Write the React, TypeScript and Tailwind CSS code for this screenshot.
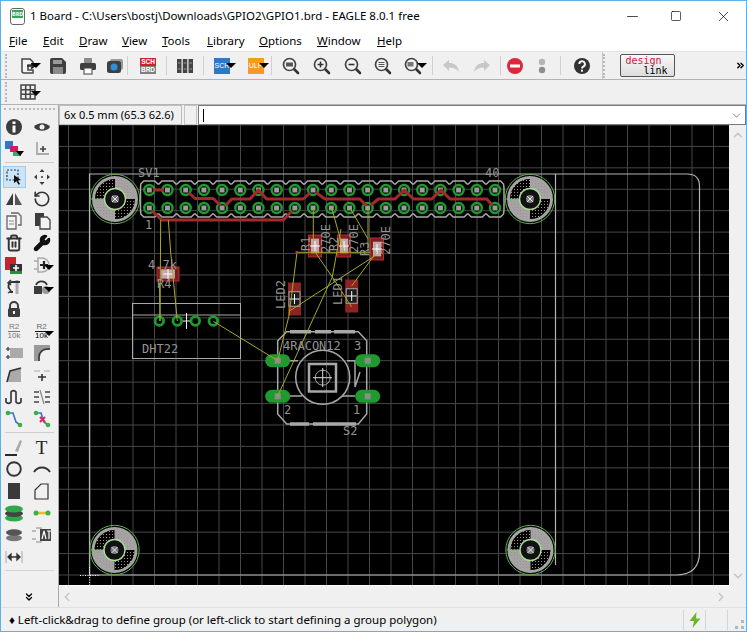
import React from "react";
import { Minus, Square, X, ChevronDown, ChevronUp, ChevronLeft, ChevronRight, ChevronsDown, ChevronsRight, Wrench, RotateCcw, Trash2 } from "lucide-react";

const Ico = ({ children, w = 18, h = 18 }: { children: React.ReactNode; w?: number; h?: number }) => (
  <svg width={w} height={h} viewBox={`0 0 ${w} ${h}`}>{children}</svg>
);

const Caret = () => (
  <span className="absolute left-[60%] top-[11px] w-0 h-0 border-x-[5px] border-x-transparent border-t-[5px] border-t-black" />
);

const Cell = ({ className, children, caret }: { className: string; children?: React.ReactNode; caret?: boolean }) => (
  <div className={`relative flex items-center justify-center h-full shrink-0 ${className}`}>
    {children}
    {caret && <Caret />}
  </div>
);

const Sep = () => <div className="w-px h-[19px] bg-[#d0d0d0] shrink-0" />;
const Grip = () => <div className="w-[3px] h-[24px] shrink-0 border-l-2 border-dotted border-[#b8b8b8]" />;

const Mag = ({ kind }: { kind: "fit" | "in" | "out" | "sel" | "last" }) => (
  <Ico>
    <path d="M11 11l5 5" stroke="#333" strokeWidth="2.6" strokeLinecap="round" />
    <circle cx="7.5" cy="7.5" r="6" fill="#f4f4f4" stroke="#444" strokeWidth="1.7" />
    {kind === "in" && <path d="M4.5 7.5h6M7.5 4.5v6" stroke="#333" strokeWidth="1.6" />}
    {kind === "out" && <path d="M4.5 7.5h6" stroke="#333" strokeWidth="1.6" />}
    {kind === "fit" && <rect x="4" y="5.5" width="7" height="4" fill="#555" />}
    {kind === "sel" && <path d="M4.5 5.5h6M4.5 7.5h6M4.5 9.5h6" stroke="#555" strokeWidth="1" />}
    {kind === "last" && <rect x="3.5" y="5" width="6" height="4.5" fill="#777" />}
  </Ico>
);

const TopToolbar = () => (
  <div className="flex items-center h-[29px] bg-[#f0f0f0] border-t border-t-[#e4e4e4] border-b border-b-[#b4b4b4]">
    <div className="w-[11px] flex justify-center"><Grip /></div>
    <Cell className="w-[31px]" caret>
      <Ico><path d="M3 2h8l3 3v3H9v5h5v3H5a2 2 0 0 1-2-2z" fill="#f4f4f4" stroke="#444" strokeWidth="1.5" /><path d="M8 9h6M12 6.5L15.5 9 12 11.5" stroke="#222" strokeWidth="1.7" fill="none" /></Ico>
    </Cell>
    <Cell className="w-[29px]">
      <Ico><path d="M1 3a2 2 0 0 1 2-2h10l4 4v10a2 2 0 0 1-2 2H3a2 2 0 0 1-2-2z" fill="#3f3f3f" /><rect x="4" y="3" width="9" height="4" fill="#9a9a9a" /><rect x="4" y="10" width="10" height="7" fill="#8a8a8a" /></Ico>
    </Cell>
    <Cell className="w-[31px]">
      <Ico><rect x="5" y="1" width="8" height="5" fill="#8b8b8b" /><rect x="1" y="6" width="16" height="7" rx="1.5" fill="#3f3f3f" /><rect x="5" y="11" width="8" height="6" fill="#fff" stroke="#3f3f3f" /></Ico>
    </Cell>
    <Cell className="w-[24px]">
      <Ico><rect x="4" y="2" width="13" height="11" rx="2" fill="#999" /><rect x="1" y="4" width="14" height="12" rx="2.5" fill="#3f3f3f" /><circle cx="8" cy="10" r="3.5" fill="#2f8fd8" /></Ico>
    </Cell>
    <div className="w-[3px]"><Sep /></div>
    <Cell className="w-[36px]">
      <div className="w-[16px] h-[16px] flex flex-col">
        <div className="h-1/2 bg-[#c1272d] text-white text-[6.5px] leading-[8px] text-center font-bold [font-family:'Liberation_Sans',sans-serif]">SCH</div>
        <div className="h-1/2 bg-[#808080] text-white text-[6.5px] leading-[8px] text-center font-bold [font-family:'Liberation_Sans',sans-serif]">BRD</div>
      </div>
    </Cell>
    <Sep />
    <Cell className="w-[36px]">
      <Ico><rect x="1" y="2" width="4.5" height="14" fill="#444" /><rect x="6.75" y="2" width="4.5" height="14" fill="#444" /><rect x="12.5" y="2" width="4.5" height="14" fill="#444" /><path d="M2 6h2.5M2 12h2.5M7.75 6h2.5M7.75 12h2.5M13.5 6H16M13.5 12H16" stroke="#999" strokeWidth="1" /></Ico>
    </Cell>
    <Sep />
    <Cell className="w-[36px]" caret>
      <div className="w-[16px] h-[16px] bg-[#2f78c4] text-white text-[7px] leading-[16px] text-center [font-family:'Liberation_Sans',sans-serif]">SCR</div>
    </Cell>
    <Cell className="w-[31px]" caret>
      <div className="w-[16px] h-[16px] bg-[#f59b23] text-white text-[7px] leading-[16px] text-center [font-family:'Liberation_Sans',sans-serif]">ULP</div>
    </Cell>
    <Sep />
    <Cell className="w-[38px]"><Mag kind="fit" /></Cell>
    <Cell className="w-[24px]"><Mag kind="in" /></Cell>
    <Cell className="w-[38px]"><Mag kind="out" /></Cell>
    <Cell className="w-[22px]"><Mag kind="sel" /></Cell>
    <Cell className="w-[38px]" caret><Mag kind="last" /></Cell>
    <Sep />
    <Cell className="w-[36px]">
      <Ico><path d="M1 8l6-5v3c5 0 9 2 10 9-2-3-5-4.500-10-4.500V14z" fill="#c8c8c8" /></Ico>
    </Cell>
    <Cell className="w-[26px]">
      <Ico><path d="M17 8l-6-5v3C6 6 2 8 1 15c2-3 5-4.500 10-4.500V14z" fill="#c8c8c8" /></Ico>
    </Cell>
    <div className="w-[5px]" />
    <Sep />
    <Cell className="w-[28px]">
      <Ico><circle cx="9" cy="9" r="8" fill="#e0263a" /><rect x="4" y="7.5" width="10" height="3" fill="#fff" /></Ico>
    </Cell>
    <Cell className="w-[26px]">
      <Ico><circle cx="9" cy="5" r="3.2" fill="#b5b5b5" /><circle cx="9" cy="13" r="3.2" fill="#8e8e8e" /></Ico>
    </Cell>
    <div className="w-[5px]" />
    <Sep />
    <Cell className="w-[41px]">
      <Ico><circle cx="9" cy="9" r="8" fill="#333" /><path d="M6.300 7a2.800 2.800 0 1 1 4 2.600C9.400 10 9 10.500 9 11.500" stroke="#fff" strokeWidth="1.9" fill="none" /><rect x="8" y="12.700" width="2" height="2" fill="#fff" /></Ico>
    </Cell>
    <div className="w-px h-[27px] bg-[#c8c8c8]" />
    <Grip />
    <div className="ml-[14px] w-[55px] h-[23px] rounded-[2px] border border-[#555] bg-gradient-to-b from-[#f8f8f8] to-[#dddddd] flex flex-col items-center justify-center [font-family:'DejaVu_Sans_Mono',monospace]">
      <span className="text-[10px] leading-[10px] text-[#e0103c] -ml-[8px]">design</span>
      <span className="text-[10px] leading-[10px] text-black ml-[16px]">link</span>
    </div>
    <ChevronsRight size={11} strokeWidth={3} className="ml-[60px] text-black" />
  </div>
);

const D = "#3c3c3c";
const Row = ({ a, b, bc, sel }: { a?: React.ReactNode; b?: React.ReactNode; bc?: boolean; sel?: boolean }) => (
  <div className="grid grid-cols-[26px_29px] h-[22px]">
    <div className="relative flex items-center justify-center">
      {sel && <div className="absolute left-[2px] top-0 w-[23px] h-[22px] bg-[#cce4f7] border border-[#9ccbef]" />}
      <div className="relative flex">{a}</div>
    </div>
    <div className="relative flex items-center justify-center">
      {b}
      {bc && <Caret />}
    </div>
  </div>
);

const LeftToolbar = () => (
  <div className="w-[58px] shrink-0 flex flex-col bg-[#f0f0f0] border-r border-[#a8a8a8]">
    <div className="h-[11px] mx-[3px] pt-[3px]"><div className="border-t-2 border-dotted border-[#b8b8b8]" /></div>
    <Row
      a={<Ico><circle cx="9" cy="9" r="8" fill={D} /><rect x="7.5" y="7.5" width="3" height="7" fill="#fff" /><rect x="7.5" y="3.5" width="3" height="2.5" fill="#fff" /></Ico>}
      b={<Ico><path d="M1 9c3-5 13-5 16 0-3 5-13 5-16 0z" fill={D} /><circle cx="9" cy="9" r="2.5" fill="#f0f0f0" /></Ico>}
    />
    <Row
      a={<Ico w={20}><rect x="1" y="1" width="8" height="8" fill="#2f78c4" /><rect x="6" y="6" width="8" height="6" fill="#d81b60" /><rect x="9" y="12" width="8" height="4" fill="#37a866" /><path d="M12 11h8l-4 5z" fill="#000" /></Ico>}
      b={<Ico><path d="M4 2v12h12" stroke="#aaa" strokeWidth="1.8" fill="none" /><path d="M7 9h6M10 6v6" stroke="#444" strokeWidth="1.6" /></Ico>}
    />
    <div className="h-[6px] mx-[4px] pt-[2px]"><div className="border-t border-[#cdcdcd]" /></div>
    <Row
      sel
      a={<Ico><rect x="2" y="2" width="11" height="10" fill="none" stroke="#333" strokeDasharray="2 1.5" strokeWidth="1.2" /><path d="M9 7l7 5-3 .5 2 3.5-1.5.8-2-3.5L9 15z" fill="#111" /></Ico>}
      b={<Ico><path d="M9 1l2.5 3h-5zM9 17l2.5-3h-5zM1 9l3-2.5v5zM17 9l-3-2.5v5z" fill={D} /><circle cx="9" cy="9" r="1" fill={D} /></Ico>}
    />
    <Row
      a={<Ico><path d="M8 3v12H1z" fill={D} /><path d="M10 3v12h7z" fill="#555" /></Ico>}
      b={<RotateCcw size={18} strokeWidth={2.2} className="text-[#333]" />}
    />
    <Row
      a={<Ico><path d="M6 1h7l3 3v9h-3M2 4h9v13H2z" fill="#f4f4f4" stroke="#666" strokeWidth="1.3" /><path d="M4 9h5M4 12h5" stroke="#888" /></Ico>}
      b={<Ico><path d="M2 1h9v13H2z" fill={D} /><path d="M7 5h7l3 3v9H7z" fill="#f4f4f4" stroke="#444" strokeWidth="1.3" /></Ico>}
    />
    <Row
      a={<Trash2 size={18} strokeWidth={2.6} className="text-[#333]" />}
      b={<Wrench size={18} fill="#111" strokeWidth={2} className="text-[#111]" />}
    />
    <Row
      a={<Ico w={20}><rect x="1" y="1" width="11" height="13" fill="#c1272d" /><rect x="6" y="8" width="12" height="10" fill="#333" /><rect x="6" y="15" width="12" height="3" fill="#2e8b3c" /><path d="M9 12h6M12 9v6" stroke="#fff" strokeWidth="1.6" /></Ico>}
      b={<Ico><path d="M1 5h4M1 13h4M5 2h4a7 7 0 0 1 0 14H5z" fill="none" stroke="#aaa" strokeWidth="1.5" /><path d="M7 9h8M11 5v8" stroke="#222" strokeWidth="2.2" /></Ico>}
      bc
    />
    <Row
      a={<Ico><path d="M12 2v14" stroke="#aaa" strokeWidth="3" /><path d="M15 4H7a4 4 0 0 0-3 6M5 14h3" stroke="#333" strokeWidth="1.8" fill="none" /><path d="M6 2l-3 3 3 2M3 9l3 4-3 2" stroke="#333" fill="none" strokeWidth="1.5" /></Ico>}
      b={<Ico><rect x="1" y="8" width="8" height="8" fill={D} /><circle cx="13" cy="12" r="4" fill="#999" /><path d="M3 7a6 6 0 0 1 11 0" stroke="#333" strokeWidth="1.8" fill="none" /></Ico>}
      bc
    />
    <Row a={<Ico><path d="M5 8V6a4 4 0 0 1 8 0v2" stroke={D} strokeWidth="2" fill="none" /><rect x="3" y="8" width="12" height="9" rx="1.5" fill={D} /><rect x="8" y="11" width="2" height="3" fill="#fff" /></Ico>} />
    <Row
      a={<div className="text-[8px] leading-[8px] text-[#777] text-center [font-family:'Liberation_Sans',sans-serif]"><div className="border-b border-[#777]">R2</div>10k</div>}
      b={<div className="text-[8px] leading-[8px] text-[#666] text-center [font-family:'Liberation_Sans',sans-serif]"><div className="border-b border-[#111]">R2</div><span className="text-black">10k</span></div>}
      bc
    />
    <Row
      a={<Ico><rect x="5" y="4" width="13" height="10" fill="#aaa" /><path d="M1 5h4M3 3v4M1 13h4M3 11v4" stroke="#333" strokeWidth="1.2" /></Ico>}
      b={<Ico><rect x="1" y="1" width="16" height="16" fill="#999" /><path d="M7 17v-4a7 7 0 0 1 7-7h3v11z" fill="#f0f0f0" /><path d="M6 17v-4a8 8 0 0 1 8-8h3" stroke="#333" strokeWidth="1.5" fill="none" /></Ico>}
    />
    <Row
      a={<Ico><path d="M2 16l3-11 11-3v14z" fill="#aaa" /><path d="M2 16l3-11 11-3" stroke="#333" strokeWidth="1.6" fill="none" /></Ico>}
      b={<Ico><path d="M1 5h6M11 5h6" stroke="#aaa" strokeWidth="1.2" /><path d="M5 11h8M9 8v7" stroke="#333" strokeWidth="1.6" /></Ico>}
    />
    <Row
      a={<Ico><path d="M1 10v4a3 3 0 0 0 5 0V4a3 3 0 0 1 5 0v10a3 3 0 0 0 5 0v-4" stroke="#333" strokeWidth="1.6" fill="none" /></Ico>}
      b={<Ico><path d="M1 4h5M1 9h5M1 14h5M12 4h5M12 9h5M12 14h5" stroke="#444" strokeWidth="1.4" /><path d="M7 2l4 14" stroke="#888" strokeWidth="1.2" /></Ico>}
    />
    <Row
      a={<Ico><path d="M2 3h6l3 9 4 3" stroke="#2f78c4" strokeWidth="1.6" fill="none" /><circle cx="3" cy="3" r="2.3" fill="#3cb043" /><circle cx="15" cy="15" r="2.3" fill="#3cb043" /></Ico>}
      b={<Ico><path d="M2 3h6l3 9 4 3" stroke="#2f78c4" strokeWidth="1.6" fill="none" /><circle cx="3" cy="3" r="2.3" fill="#3cb043" /><circle cx="15" cy="15" r="2.3" fill="#3cb043" /><path d="M7 7l5 5M12 7l-5 5" stroke="#e0265a" strokeWidth="2" /></Ico>}
    />
    <div className="h-[6px] mx-[4px] pt-[2px]"><div className="border-t border-[#cdcdcd]" /></div>
    <Row
      a={<Ico><path d="M0 17h12" stroke="#111" strokeWidth="1.8" /><path d="M10 13l5-11 2 1-4 11z" fill="#aaa" /></Ico>}
      b={<span className="text-[19px] leading-none text-[#222] [font-family:'Liberation_Serif',serif]">T</span>}
    />
    <Row
      a={<Ico><circle cx="9" cy="9" r="6.800" stroke="#333" strokeWidth="1.9" fill="none" /></Ico>}
      b={<Ico><path d="M1 12c4-6 12-6 16 0" stroke="#333" strokeWidth="1.9" fill="none" /></Ico>}
    />
    <Row
      a={<div className="w-[12px] h-[16px] bg-[#3a3a3a]" />}
      b={<Ico><path d="M2 17V8l6-6h7v15z" fill="none" stroke="#333" strokeWidth="1.2" /></Ico>}
    />
    <Row
      a={<Ico w={20}><ellipse cx="10" cy="14" rx="9" ry="3.500" fill="#2fa84a" /><ellipse cx="10" cy="9.500" rx="9" ry="3.500" fill="#444" /><ellipse cx="10" cy="5" rx="9" ry="3.500" fill="#2fa84a" /></Ico>}
      b={<Ico><path d="M3 9h12" stroke="#e8c020" strokeWidth="2.500" /><circle cx="3" cy="9" r="2.500" fill="#3cb043" /><circle cx="15" cy="9" r="2.500" fill="#3cb043" /></Ico>}
    />
    <Row
      a={<Ico><ellipse cx="9" cy="12" rx="8" ry="3.200" fill="#777" /><ellipse cx="9" cy="6.500" rx="8" ry="3.200" fill="#555" /></Ico>}
      b={<Ico w={20}><path d="M0 5h4M0 13h4M4 2h5v14H4" fill="none" stroke="#aaa" strokeWidth="1.3" /><rect x="8" y="3" width="11" height="12" fill="#444" /><path d="M10 13l2-8 2 8M15 5h4M17 5v8" stroke="#fff" strokeWidth="1.2" fill="none" /></Ico>}
    />
    <Row a={<Ico w={18}><path d="M1 3v12M17 3v12" stroke="#aaa" /><path d="M3 9h12M3 9l3-3v6zM15 9l-3-3v6z" stroke="#333" strokeWidth="1.3" fill="#333" /></Ico>} />
    <div className="h-[6px] mx-[4px] pt-[2px]"><div className="border-t border-[#d4d4d4]" /></div>
    <div className="flex-1 flex items-end justify-center pb-[4px] pr-[2px]">
      <ChevronsDown size={12} strokeWidth={2.5} className="text-black" />
    </div>
  </div>
);

// board drawing, page coordinates
const padsX = Array.from({ length: 20 }, (_, i) => 149.3 + i * 18.195);
const gridX = Array.from({ length: 31 }, (_, i) => 68.5 + i * 21.5);
const gridY = Array.from({ length: 22 }, (_, i) => 576 - i * 21.43);

const headerOutline = () => {
  const top = padsX.map((x) => `L${x - 8.5} 185 L${x - 5.5} 182 L${x + 5.5} 182 L${x + 8.5} 185`).join(" ");
  const bot = [...padsX].reverse().map((x) => `L${x + 8.5} 215 L${x + 5.5} 218 L${x - 5.5} 218 L${x - 8.5} 215`).join(" ");
  return `M140.5 189 ${top} L504 189 L504 211 ${bot} L140.5 211 Z`;
};

const Hole = ({ x, y }: { x: number; y: number }) => (
  <g>
    <circle cx={x} cy={y} r="22.500" fill="#000" />
    <path d={`M${x} ${y}V${y - 22}A22 22 0 0 1 ${x + 22} ${y}z M${x} ${y}V${y + 22}A22 22 0 0 1 ${x - 22} ${y}z`} fill="#a4a4a4" />
    <circle cx={x} cy={y} r="22" fill="url(#holeDots)" />
    <circle cx={x} cy={y} r="21.500" fill="none" stroke="#a4a4a4" strokeWidth="3" />
    <circle cx={x} cy={y} r="24.700" fill="none" stroke="#5fb04a" />
    <path d={`M${x - 24} ${y}H${x - 11}`} stroke="#6fc05a" />
    <circle cx={x} cy={y} r="10.500" fill="#111" stroke="#a8dc98" strokeWidth="1.400" />
    <circle cx={x} cy={y} r="4" fill="#7c7c7c" />
    <path d={`M${x - 3} ${y - 3}l6 6M${x + 3} ${y - 3}l-6 6`} stroke="#e4e4e4" />
  </g>
);

const Part = ({ cx, cy, w, h, pad }: { cx: number; cy: number; w: number; h: number; pad?: boolean }) => (
  <g>
    {pad ? (
      <>
        <rect x={cx - w / 2} y={cy - h / 2} width={w} height={h} fill="#8f2222" />
        <rect x={cx - w / 2 + 1} y={cy - h * 0.22} width={w - 2} height={h * 0.44} fill="#1a1a1a" stroke="#aaa" />
      </>
    ) : (
      <>
        <rect x={cx - w / 2} y={cy - h / 2} width={w} height={h} fill="#7c1e1e" stroke="#b52a2a" />
        <rect x={cx - w / 3.2} y={cy - h / 3} width={w / 1.6} height={h / 1.5} fill="#c4a8a8" />
      </>
    )}
    <path d={`M${cx - 5} ${cy}h10M${cx} ${cy - 5}v10`} stroke="#fff" />
  </g>
);

const Label = ({ x, y, t, rot }: { x: number; y: number; t: string; rot?: boolean }) => (
  <text
    x={x}
    y={y}
    fill="#949494"
    fontSize="12"
    fontFamily="'DejaVu Sans Mono', monospace"
    transform={rot ? `rotate(-90 ${x} ${y})` : undefined}
  >
    {t}
  </text>
);

const Board = () => (
  <svg className="block w-full h-full" viewBox="59 126 670 460">
    <defs>
      <pattern id="holeDots" width="3" height="3" patternUnits="userSpaceOnUse">
        <rect x="1" y="1" width="1" height="1" fill="#b08a8a" />
      </pattern>
    </defs>
    <rect x="59" y="126" width="670" height="460" fill="#000" />
    {gridX.map((x) => <path key={x} d={`M${x} 126V586`} stroke="#474747" />)}
    {gridY.map((y) => <path key={y} d={`M59 ${y}H729`} stroke="#474747" />)}
    <path d="M89.500 175H687Q699.500 175 699.500 187V553Q699.500 576 676 576H89.500ZM555.500 175V566" fill="none" stroke="#b4b4b4" strokeWidth="1.200" />
    <path d="M80 576.500H100M89.500 568V586" stroke="#fff" strokeDasharray="1 1.500" />

    <Hole x={115} y={200} />
    <Hole x={530} y={200} />
    <Hole x={114.5} y={551} />
    <Hole x={530.5} y={551} />

    <path d={headerOutline()} fill="none" stroke="#a8a8a8" strokeWidth="1.500" />
    {[191, 209].map((y) =>
      padsX.map((x) => (
        <g key={`${x}-${y}`}>
          <circle cx={x} cy={y} r="5" fill="#000" stroke="#1f9a2e" strokeWidth="2.400" />
          <rect x={x - 2.5} y={y - 2.5} width="5" height="5" fill="#9c9c9c" />
        </g>
      ))
    )}
    <g fill="none" stroke="#a12a2a" strokeWidth="3" strokeLinejoin="round">
      <path d="M153 191H164" />
      <path d="M189 194L195 199.500H213.300L220 206M226 206L231.700 200H250L258.300 191L266.700 200H303.300L310 194" />
      <path d="M152 212L161.700 221H283.300L292 212" />
      <path d="M316 193.500L325 200H360L366 206.500M371 206L378.300 200H395L404.300 191L413.300 200H431.700L441 191L450 200H486.700L492 206" />
    </g>

    <Part cx={315} cy={247} w={13} h={22} />
    <Part cx={344} cy={247} w={13} h={22} />
    <Part cx={377} cy={250} w={13} h={22} />
    <Part cx={168} cy={275} w={22} h={14} />
    <Part cx={294.5} cy={300} w={13} h={33} pad />
    <Part cx={351.7} cy={297} w={13} h={33} pad />

    <rect x="132.500" y="304.500" width="108" height="55" fill="none" stroke="#a8a8a8" />
    <path d="M132.500 316H240.500" stroke="#a8a8a8" />
    {[159.3, 177.3, 195.3, 213.3].map((x) => (
      <circle key={x} cx={x} cy="322" r="4.300" fill="#000" stroke="#1f9a2e" strokeWidth="2.800" />
    ))}
    <path d="M186.500 314V330M183 322H190" stroke="#eee" />

    <g fill="none" stroke="#a8a8a8" strokeWidth="1.500">
      <path d="M277.700 341.700L286.700 332.700H358.300L366.700 341.700V415L358.300 425H286.700L277.700 415Z" />
      <circle cx="322.700" cy="378.300" r="27" />
      <rect x="309" y="365" width="27" height="27.500" strokeWidth="2.500" />
      <circle cx="322.700" cy="378.700" r="7.500" strokeWidth="1" />
      <path d="M313 378.700H332M322.700 369V388" strokeWidth="1" stroke="#ddd" />
      <path d="M290 361.700H298M347 361.700H355V388L360 373M290 397H302M342 397H355" />
      <path d="M315 332.700H331M290 332.700H311M334 332.700H355M290 425H309M313 425H356" strokeWidth="3.500" />
    </g>
    {[[277.7, 361.7], [367.7, 361.7], [277.7, 397.3], [367.7, 397.3]].map(([x, y]) => (
      <g key={`${x}${y}`}>
        <rect x={x - 12.5} y={y - 6.5} width="25" height="13" rx="6.500" fill="#1f9a2e" />
        <rect x={x - 3} y={y - 3} width="6" height="6" fill="#8c8c8c" />
      </g>
    ))}

    <g fill="none" stroke="#a8a82a" strokeWidth="1">
      <path d="M160.700 221L160 322M159.500 285L160 322M168.300 221L170.700 253L177.300 322" />
      <path d="M313.300 209V242M331.700 209L344 253M350 209L368 240M368 209V253M297 253.300H370" />
      <path d="M297 253.300L289 316.700L277.700 361.700" />
      <path d="M315 253L332.300 278L351.700 308M341 230L332.300 278L277.700 397" />
      <path d="M376.700 253L351.700 287M375 256.700L290 311.700" />
      <path d="M213.300 322.300L277.700 361.700" />
    </g>
    <rect x="295.500" y="252" width="2.500" height="2.500" fill="#c03030" />

    <Label x={138} y={178} t="SV1" />
    <Label x={145} y={230} t="1" />
    <Label x={485} y={178} t="40" />
    <Label x={148} y={270} t="4.7k" />
    <Label x={157} y={289} t="R4" />
    <Label x={142} y={354} t="DHT22" />
    <Label x={310} y={252} t="R1" rot />
    <Label x={330} y={254} t="270E" rot />
    <Label x={338} y={252} t="R2" rot />
    <Label x={358} y={254} t="270E" rot />
    <Label x={369} y={257} t="R3" rot />
    <Label x={390} y={256} t="270E" rot />
    <Label x={285} y={310} t="LED2" rot />
    <Label x={342} y={306} t="LED1" rot />
    <Label x={283} y={351} t="4RACON12" />
    <Label x={354} y={351} t="3" />
    <Label x={284} y={415} t="2" />
    <Label x={353} y={415} t="1" />
    <Label x={343} y={436} t="S2" />
  </svg>
);

const MI = ({ w, k, rest }: { w: string; k: string; rest: string }) => (
  <div className={w}>
    <span className="underline">{k}</span>
    {rest}
  </div>
);

export default function App() {
  return (
    <div className="w-[747px] h-[632px] flex flex-col overflow-hidden bg-white border border-[#5ab2e8] text-[11.5px] text-black [font-family:'Noto_Sans',sans-serif]">
      <div className="h-[30px] shrink-0 flex items-center bg-white pl-[9px]">
        <div className="w-[15px] h-[17px] rounded-[3px] border border-[#666] bg-white pt-[1px] px-[1px]">
          <div className="h-[8px] bg-[#3aa655] text-white text-[5.5px] leading-[8px] text-center font-bold">BRD</div>
        </div>
        <div className="ml-[5px] whitespace-nowrap text-[11.5px]">1 Board - C:\Users\bostj\Downloads\GPIO2\GPIO1.brd - EAGLE 8.0.1 free</div>
        <div className="ml-auto flex items-center">
          <Minus size={17} strokeWidth={1} className="mr-[29px]" />
          <Square size={12} strokeWidth={1.3} className="mr-[33px]" />
          <X size={17} strokeWidth={1} className="mr-[14px]" />
        </div>
      </div>
      <div className="h-[20px] shrink-0 flex items-center bg-white pl-[8px] whitespace-nowrap">
        <MI w="w-[34px]" k="F" rest="ile" />
        <MI w="w-[36px]" k="E" rest="dit" />
        <MI w="w-[43px]" k="D" rest="raw" />
        <MI w="w-[40px]" k="V" rest="iew" />
        <MI w="w-[45px]" k="T" rest="ools" />
        <MI w="w-[52px]" k="L" rest="ibrary" />
        <MI w="w-[58px]" k="O" rest="ptions" />
        <MI w="w-[60px]" k="W" rest="indow" />
        <MI w="w-[40px]" k="H" rest="elp" />
      </div>
      <TopToolbar />
      <div className="h-[25px] shrink-0 flex items-center bg-[#f0f0f0] border-b border-[#b4b4b4]">
        <div className="w-[11px] flex justify-center"><div className="w-[3px] h-[20px] border-l-2 border-dotted border-[#b8b8b8]" /></div>
        <Cell className="w-[31px]" caret>
          <Ico w={16} h={16}><path d="M1 1h14v14H1zM1 5.700h14M1 10.300h14M5.700 1v14M10.300 1v14" fill="none" stroke="#444" strokeWidth="1.500" /></Ico>
        </Cell>
      </div>
      <div className="flex-1 flex min-h-0">
        <LeftToolbar />
        <div className="flex-1 flex flex-col min-w-0">
          <div className="h-[20px] shrink-0 flex bg-[#f0f0f0] items-stretch">
            <div className="w-[123px] border border-[#bdbdbd] px-[4px] leading-[18px] whitespace-nowrap text-[11px]">6x 0.5 mm (65.3 62.6)</div>
            <div className="w-[13px] ml-[2px] border border-[#c4c4c4]" />
            <div className="ml-[1px] flex-1 flex items-center bg-white border border-[#7a7a7a] pl-[4px]">
              <div className="w-px h-[13px] bg-black" />
              <ChevronDown size={13} strokeWidth={1.3} className="ml-auto mr-[2px] text-[#555]" />
            </div>
          </div>
          <div className="flex-1 flex min-h-0">
            <div className="w-[670px] h-[460px] bg-black shrink-0"><Board /></div>
            <div className="flex-1 flex flex-col justify-between items-center py-[3px] bg-[#f0f0f0]">
              <ChevronUp size={14} strokeWidth={2.5} className="text-[#c4c4c4]" />
              <ChevronDown size={14} strokeWidth={2.5} className="text-[#c4c4c4]" />
            </div>
          </div>
          <div className="h-[21px] shrink-0 flex items-center justify-between pr-[18px] pl-[1px] bg-[#f0f0f0]">
            <ChevronLeft size={14} strokeWidth={2.5} className="text-[#c4c4c4]" />
            <ChevronRight size={14} strokeWidth={2.5} className="text-[#c4c4c4]" />
          </div>
        </div>
      </div>
      <div className="h-[24px] shrink-0 flex items-center bg-[#f0f0f0] border-t border-[#e0e0e0] pl-[8px] whitespace-nowrap">
        <span>♦ Left-click&amp;drag to define group (or left-click to start defining a group polygon)</span>
        <div className="ml-auto w-px h-[20px] bg-[#d4d4d4]" />
        <div className="w-[21px] flex justify-center">
          <Ico w={14}><path d="M8.500 1L1.500 10h4.500L4.500 17 12.500 7.500H8z" fill="#6fb52c" /></Ico>
        </div>
        <div className="w-px h-[20px] bg-[#d4d4d4]" />
        <div className="w-[21px]" />
        <div className="w-px h-[20px] bg-[#d4d4d4]" />
        <div className="w-[18px] h-full flex items-end justify-end pr-[2px] pb-[2px]">
          <div className="w-[9px] h-[9px] border-b-[3px] border-r-[3px] border-dotted border-[#b8b8b8]" />
        </div>
      </div>
    </div>
  );
}
